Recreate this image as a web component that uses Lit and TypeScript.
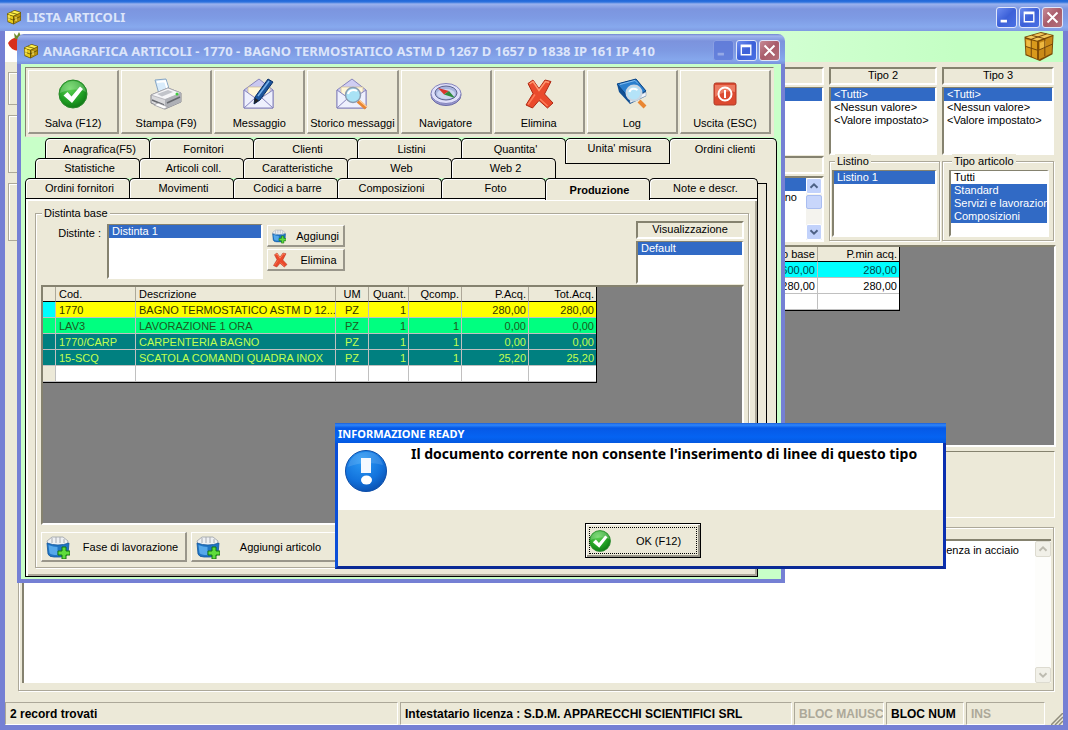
import { LitElement, html, css, svg } from "lit";
import { customElement, property } from "lit/decorators.js";
import { classMap } from "lit/directives/class-map.js";

const icons: Record<string, any> = {
  cube: svg`<svg viewBox="0 0 16 16"><path d="M1 4.500 8.500 1 15 3v8.500L7.500 15.500 1.500 13z" fill="#6b5a08"/><path d="M1.500 5 8.500 1.800 14.300 3.400 7.300 6.800z" fill="#fff04a"/><path d="M1.500 5.800 7 7.600V14.500L2 12.300z" fill="#e8cc1c"/><path d="M8 7.600 14.300 4.300V11.200L8 14.500z" fill="#b89410"/><path d="M4.600 3.600 10.800 5.200M2 9 7 11 14.300 7.500" stroke="#4a3c00" stroke-width=".7" fill="none"/><path d="M3 6v5M10 8v4" stroke="#fff580" stroke-width="1"/></svg>`,
  parcel: svg`<svg viewBox="0 0 32 32"><path d="M1 6 18 1l13 3-1 20-13 7L2 25z" fill="#7a4a04"/><path d="M2.500 6.500 17.500 2l12 2.500L14 10z" fill="#f4c95a"/><path d="M2 8l12 3v18L3 24z" fill="#d9991c"/><path d="M16 11 30 5.500 29 23 16 29.500z" fill="#c98a18"/><path d="M3 9l5 1.500v7L3 16z" fill="#f0bc45"/><path d="M17 12l6-2v7l-6 2z" fill="#eeb840"/><path d="M8.500 4.500 22 8v18M24 3 8 8.500V27M2.500 16 15 20l15-6.500" stroke="#70430a" stroke-width="1" fill="none"/><path d="M15 10.500V30" stroke="#8a5408" stroke-width="1"/></svg>`,
  check: svg`<svg viewBox="0 0 32 32"><defs><radialGradient id="gc" cx=".4" cy=".3" r=".8"><stop offset="0" stop-color="#5fd455"/><stop offset=".6" stop-color="#1f9e22"/><stop offset="1" stop-color="#0c6a12"/></radialGradient></defs><circle cx="16" cy="16" r="14" fill="url(#gc)" stroke="#2a8a2c"/><path d="M3 15C4 7 10 3 16 3s12 4 13 11C22 10 12 11 3 15z" fill="#fff" opacity=".22"/><path d="M6.500 17.500 10.500 14l4 4.500L23 8.500l3 2.500L15 25z" fill="#fff"/></svg>`,
  printer: svg`<svg viewBox="0 0 32 32"><path d="M5 2 16 1l4 13-11 2z" fill="#d9ecfb" stroke="#86a5c4"/><path d="M7 4l8-.8 2.500 8" fill="none" stroke="#fff" stroke-width="2"/><path d="M1 17 18 10l13 5v9l-16 7L1 25z" fill="#d9d9dc" stroke="#85858c"/><path d="M1 17 18 10l13 5-16 6.500z" fill="#f6f6f8" stroke="#a4a4aa" stroke-width=".7"/><path d="m7 16 11-4 5 2-11 4.500z" fill="#c2c4ca"/><path d="M15 21.500V31l16-7v-9z" fill="#aeb0b6"/><path d="m2 22 12 5M17 25l13-6" stroke="#66686e" stroke-width="1.500"/><path d="m4 27 10 4 4-2-10-4z" fill="#fff" stroke="#96969c" stroke-width=".7"/><circle cx="27" cy="16" r="1.500" fill="#3ecb3c"/></svg>`,
  message: svg`<svg viewBox="0 0 32 32"><path d="M1 12 16 1l14 11v18H1z" fill="#c9c8f0" stroke="#8684bd"/><path d="M5 9h22v13H5z" fill="#fff6d8" stroke="#cdbb8c" stroke-width=".7"/><path d="M1 12l14 10 15-10v18H1z" fill="#eef0fd" stroke="#8684bd"/><path d="m1 30 11-10M30 30 19 20" stroke="#8684bd"/><path d="m12 19 13-18 5 3-13 18-6 4z" fill="#1c559c" stroke="#0b2f66"/><path d="m15 18 11-15" stroke="#79b2ea" stroke-width="1.500"/><path d="m11 26 1-6 4 2.500z" fill="#222"/></svg>`,
  history: svg`<svg viewBox="0 0 32 32"><path d="M1 12 16 1l14 11v18H1z" fill="#cfcdf2" stroke="#8684bd"/><path d="M5 9h22v13H5z" fill="#fff6d8" stroke="#cdbb8c" stroke-width=".7"/><path d="M1 12l14 10 15-10v18H1z" fill="#eef0fd" stroke="#8684bd"/><path d="m1 30 11-10M30 30 19 20" stroke="#8684bd"/><path d="m22 23 8 7" stroke="#e98632" stroke-width="4"/><path d="m23 22 8 7" stroke="#ffcf9a" stroke-width="1.200"/><circle cx="17" cy="17" r="7.500" fill="#a9e2f5" stroke="#8a9bb0" stroke-width="1.500"/><path d="M12 16c1-4 6-5 9-3" stroke="#fff" stroke-width="2" fill="none"/></svg>`,
  compass: svg`<svg viewBox="0 0 32 32"><ellipse cx="16" cy="17" rx="15" ry="10.500" fill="#9a9ad0" stroke="#6a6aa4"/><ellipse cx="16" cy="15.500" rx="15" ry="10" fill="#e0e0fa" stroke="#8484bc"/><ellipse cx="16" cy="15" rx="11" ry="7" fill="#a9b4de" stroke="#5a628e"/><ellipse cx="16" cy="16" rx="9" ry="5" fill="#cdd6f2"/><path d="m8 10 11 3-5 3.500z" fill="#d9342c"/><path d="m25 20-11-3.500L19 13z" fill="#2e8a3c"/></svg>`,
  cross: svg`<svg viewBox="0 0 32 32"><path d="M5 5.500 10 2l6 8.500L22 2l6 1.500-6.500 12.500L30 25l-5.500 5-8.500-7.500L9.500 30 3 27l7-11.500z" fill="#ea4a2c" stroke="#b02a14" stroke-width="1"/><path d="M6.500 6 10 3.500l6 9 6.500-9 3.500 1" fill="none" stroke="#ff9a72" stroke-width="1.500"/><path d="M5 26.500 12 16.500M17 21l7.500 7" fill="none" stroke="#ff7c58" stroke-width="1.500"/></svg>`,
  log: svg`<svg viewBox="0 0 32 32"><path d="M1 6 20 1l10 12v5L14 26 3 14z" fill="#0f4f94"/><path d="M1 6 20 1l10 12-16 8z" fill="#2b7fcd" stroke="#0d4584"/><path d="m14 22 16-8v4l-16 7z" fill="#f2f5fa" stroke="#7d93ad" stroke-width=".5"/><path d="M4 6.500 19 2.500l3 3" fill="none" stroke="#83bdf0"/><path d="m23 23 6 6" stroke="#e98632" stroke-width="4"/><circle cx="18" cy="15" r="7.500" fill="#b4e3f8" stroke="#c9d6e2" stroke-width="2"/><path d="M13.500 14c1-4 5-4 8-2" stroke="#fff" stroke-width="2" fill="none"/></svg>`,
  exit: svg`<svg viewBox="0 0 32 32"><rect x="5" y="5" width="22" height="22" rx="2" fill="#dc4a30" stroke="#b03a28"/><path d="M6 7h20v7C19 12 12 15 6 19z" fill="#f29078" opacity=".7"/><circle cx="16" cy="16" r="6.500" fill="none" stroke="#fff" stroke-width="2"/><path d="M16 12v8" stroke="#fff" stroke-width="2"/></svg>`,
  basket: svg`<svg viewBox="0 0 24 24"><path d="M1 6 6 2h11l5 4-2 7H3z" fill="#eef0f2" stroke="#9a9ea4" stroke-width=".8"/><path d="M6 3v5M10 2v6M14 2v6M18 4v4" stroke="#a8acb2"/><path d="M1 8q11 4 22 0l-1 11q-2 3-8 3H8q-5 0-6-3z" fill="#1f74c4" stroke="#13579c" stroke-width=".8"/><path d="M2.500 10q5 2 9 2v8Q5 20 3.500 18z" fill="#55a8ea"/><path d="M16 12h4v4h4v4h-4v4h-4v-4h-4v-4h4z" fill="#5edc3c" stroke="#14750f"/></svg>`,
  info: svg`<svg viewBox="0 0 42 42"><defs><radialGradient id="gi" cx=".4" cy=".25" r=".85"><stop offset="0" stop-color="#2b9af5"/><stop offset=".6" stop-color="#1272dc"/><stop offset="1" stop-color="#0a48a4"/></radialGradient></defs><circle cx="21" cy="21" r="20.500" fill="url(#gi)" stroke="#0c4da8"/><path d="M3 17Q6 3 21 2q13 0 17 13-18-5-35 2z" fill="#fff" opacity=".13"/><path d="M16 8h10v15H16z" fill="#f4f8ff"/><ellipse cx="21.500" cy="30" rx="5.500" ry="4.500" fill="#fff"/></svg>`,
  berry: svg`<svg viewBox="0 0 20 24"><path d="M0 12Q3 7 10 6q6-2 9 4-1 8-8 10Q2 19 0 12z" fill="#d8301c"/><path d="m6 2 3 3 2-4 2 4 4-2-3 5H7z" fill="#6d8a2a"/></svg>`,
  min: svg`<svg viewBox="0 0 21 21"><path d="M4 13h7v3H4z" fill="#fff"/></svg>`,
  max: svg`<svg viewBox="0 0 21 21"><path d="M4 4h12v12H4zM5.500 7v7.500h9V7z" fill="#fff" fill-rule="evenodd"/></svg>`,
  close: svg`<svg viewBox="0 0 21 21"><path d="m5 5 11 11m0-11-11 11" stroke="#fff" stroke-width="2.200"/></svg>`,
  up: svg`<svg viewBox="0 0 16 16"><path d="M4 10l4-4 4 4" fill="none" stroke="currentColor" stroke-width="2.200"/></svg>`,
  down: svg`<svg viewBox="0 0 16 16"><path d="M4 6l4 4 4-4" fill="none" stroke="currentColor" stroke-width="2.200"/></svg>`,
  grip: svg`<svg viewBox="0 0 12 12"><path d="M0 12 12 0M4 12l8-8M8 12l4-4" stroke="#8f8c7c" stroke-width="1.500"/></svg>`,
};

const shared = css`
  * { box-sizing: border-box; }
  svg { display: block; width: 100%; height: 100%; }
  button, select, textarea { font: inherit; color: inherit; margin: 0; border-radius: 0; }
`;

@customElement("window-title")
class WindowTitle extends LitElement {
  @property() caption = "";
  @property({ type: Boolean }) child = false;
  static styles = [shared, css`
    :host { display: block; }
    .bar {
      display: flex; align-items: center; gap: 2px; height: 31px; padding: 3px 5px 0 6px;
      background: linear-gradient(#1f66d8 0, #2d72dd 2px, #9ab2ee 4px, #7c95df 9px, #7e9be4 18px, #87a9ee 27px, #7f9ae2);
      color: #dce5fa;
    }
    .bar.child {
      height: 30px; border-radius: 7px 7px 0 0;
      background: linear-gradient(#6f83cf 0, #a0b4ee 2px, #7c93dd 7px, #7e9ae3 17px, #86a8ed 26px, #7a92dc);
    }
    .ico { width: 16px; height: 16px; }
    .cap { flex: 1; margin: 0 0 0 2px; font: bold 13px/16px "Noto Sans", sans-serif; white-space: nowrap; }
    .ctl { width: 21px; height: 21px; padding: 0; border: 1px solid #dfe6fa; border-radius: 3px;
      background: linear-gradient(135deg, #6c8cf0, #3c60d8 50%, #4a70e4); }
    .ctl.x { background: linear-gradient(135deg, #c78a96, #a85c6a 50%, #b4707a); }
    .ctl.off { border-color: #8ea2e4; background: #5a76d8; opacity: .75; }
    .ctl.off svg { opacity: .4; }
  `];
  render() {
    return html`<header class=${classMap({ bar: true, child: this.child })}>
      <span class="ico">${icons.cube}</span>
      <h1 class="cap">${this.caption}</h1>
      <button class=${classMap({ ctl: true, off: this.child })} aria-label="Riduci a icona">${icons.min}</button>
      <button class="ctl" aria-label="Ingrandisci">${icons.max}</button>
      <button class="ctl x" aria-label="Chiudi">${icons.close}</button>
    </header>`;
  }
}

const tools = [
  ["check", "Salva (F12)"], ["printer", "Stampa (F9)"], ["message", "Messaggio"], ["history", "Storico messaggi"],
  ["compass", "Navigatore"], ["cross", "Elimina"], ["log", "Log"], ["exit", "Uscita (ESC)"],
];
const tabRows = [
  ["Anagrafica(F5)", "Fornitori", "Clienti", "Listini", "Quantita'", "Unita' misura", "Ordini clienti"],
  ["Statistiche", "Articoli coll.", "Caratteristiche", "Web", "Web 2"],
  ["Ordini fornitori", "Movimenti", "Codici a barre", "Composizioni", "Foto", "Produzione", "Note e descr."],
];
const rows = [
  ["main", "1770", "BAGNO TERMOSTATICO ASTM D 12...", "PZ", "1", "", "280,00", "280,00"],
  ["work", "LAV3", "LAVORAZIONE 1 ORA", "PZ", "1", "1", "0,00", "0,00"],
  ["part", "1770/CARP", "CARPENTERIA BAGNO", "PZ", "1", "1", "0,00", "0,00"],
  ["part", "15-SCQ", "SCATOLA COMANDI QUADRA INOX", "PZ", "1", "1", "25,20", "25,20"],
  ["blank", "", "", "", "", "", "", ""],
];

@customElement("app-root")
class AppRoot extends LitElement {
  static styles = [shared, css`
    :host { display: block; position: relative; height: 100vh; min-height: 730px; overflow: hidden;
      font: 11px/13px "Liberation Sans", Arial, sans-serif; color: #000; background: #ece9d8; }

    .main { display: flex; flex-direction: column; height: 100%; background: #7580d4; }
    .client { flex: 1; display: flex; flex-direction: column; margin: 0 5px 5px; background: #ece9d8; }
    .strip { display: flex; justify-content: space-between; height: 31px; padding: 0 8px 0 3px;
      background: linear-gradient(90deg, #fff 15%, #c4ffc4 90%); }
    .strip .berry { width: 20px; height: 24px; }
    .strip .parcel { width: 32px; height: 31px; }

    .filters { display: flex; justify-content: space-between; padding: 5px 9px 0 3px; }
    .stubs { display: flex; flex-direction: column; gap: 10px; padding-top: 5px; width: 300px; }
    .stub { height: 33px; border: 1px solid #aca899; box-shadow: inset 1px 1px 0 #fff; }
    .stub.tall { height: 58px; }
    .cols { display: grid; grid-template-columns: 108px 108px 112px; gap: 5px; }
    .col { display: flex; flex-direction: column; min-width: 0; }

    .head, .list, .grid { border: 2px solid; border-color: #85826f #fff #fff #85826f; }
    .head { height: 18px; line-height: 12px; text-align: center; margin-bottom: 2px; }
    .list { display: block; width: 100%; padding: 0; border-top-width: 1px; background: #fff; overflow: hidden; outline: 0; }
    .list option { height: 13px; min-height: 13px; line-height: 13px; padding: 0 3px; color: #000; }
    .list option:checked { background: #316ac5 linear-gradient(#316ac5, #316ac5); color: #fff; }
    .h68 { height: 68px; }
    .h55 { height: 55px; }
    .h43 { height: 43px; }
    .second { margin-top: 1px; }
    .scrolled { display: flex; height: 66px; border: 2px solid; border-color: #85826f #fff #fff #85826f; background: #fff; }
    .scrolled .list { flex: 1; min-width: 0; border: 0; height: auto; text-align: right; }
    .scrolled .list option { padding-right: 9px; }
    .sbar { display: flex; flex-direction: column; width: 16px; background: #f4f3ee; color: #4d6185; }
    .sbar button { width: 16px; height: 16px; padding: 0; border: 1px solid #fff; border-radius: 2px; background: #c2d2fb; }
    .sbar .thumb { height: 14px; border: 1px solid #a9bdf0; border-radius: 2px; background: #c8d6fb; margin: 1px 0 auto; }
    .sbar.off { color: #bdbbb0; }
    .sbar.off button { border-color: #dddbd0; background: #f1f0e8; }
    .sbar.off button:last-child { margin-top: auto; }

    .group { min-width: 0; margin: 0; padding: 2px; border: 1px solid #aca899; box-shadow: inset 1px 1px 0 #fff, 1px 1px 0 #fff; }
    .group legend { margin-left: 3px; padding: 0 2px; line-height: 14px; background: #ece9d8; }
    .group.small { height: 87px; margin: -1px -3px 0 0; }
    .group.small .list { height: 67px; }
    .group.narrow { margin-right: 0; padding: 2px 4px 2px 6px; }

    .grid { background: #808080; }
    .back { height: 202px; margin: 3px 7px 0 13px; display: flex; padding-left: 680px; }
    table { border-collapse: separate; border-spacing: 0; table-layout: fixed; background: #fff;
      border-right: 1px solid #000; border-bottom: 1px solid #000; }
    .back table { width: 200px; }
    th, td { height: 16px; border-right: 1px solid #c0c0c0; border-bottom: 1px solid #c0c0c0;
      font-weight: normal; text-align: left; white-space: nowrap; overflow: hidden; }
    td { padding: 1px 3px 0; line-height: 14px; }
    th { height: 15px; padding: 0 3px; background: #ece9d8; border-color: #aca899; border-bottom-color: #000; line-height: 14px; }
    th:last-child, td:last-child { border-right: 0; }
    .num { text-align: right; padding-right: 2px; }
    .mid { text-align: center; }
    .cur td { background: #0ff; color: #00474a; }
    .panel { height: 67px; margin: 4px 8px 0 13px; border: 1px solid; border-color: #85826f #fff #fff #85826f; }
    .notes { flex: 1; display: flex; min-height: 164px; margin: 9px 9px 0 13px; padding: 11px 2px 7px 3px; border: 1px solid #aca899;
      box-shadow: inset 1px 1px 0 #fff, 1px 1px 0 #fff; }
    .notes textarea { flex: 1; resize: none; border: 0; border-top: 2px solid #85826f; border-left: 2px solid #85826f;
      background: #fff; text-align: right; padding: 3px 16px 0 0; outline: 0; overflow: hidden; }
    .notes .sbar { border-top: 2px solid #85826f; background: #fdfdfb; }
    .status { display: grid; grid-template-columns: 393px 1fr 90px 78px 79px 16px; gap: 2px; margin-top: 11px; height: 23px;
      font-size: 12px; font-weight: bold; line-height: 22px; white-space: nowrap; }
    .status span { padding-left: 4px; border: 1px solid; border-color: #aca899 #fff #fff #aca899; overflow: hidden; }
    .status .dim { color: #aca899; }
    .status i { align-self: end; justify-self: end; width: 12px; height: 12px; }

    .child { position: absolute; left: 17px; top: 34px; width: 768px; }
    .frame { border: 4px solid #7580d4; border-top: 0; padding: 3px 4px 2px; background: #c8ffc8; }
    .toolbar { display: flex; gap: 2px; margin-right: 3px; padding: 2px; border: 1px solid; border-color: #85826f #ece9d8 #ece9d8 #85826f; background: #ece9d8; }
    .tool { flex: 1; display: flex; flex-direction: column; align-items: center; justify-content: space-between; height: 64px; padding: 7px 0 2px;
      border: 1px solid; border-width: 1px 2px 2px 1px; border-color: #fff #99968a #99968a #fff; background: #ece9d8; white-space: nowrap; }
    .tool i { width: 32px; height: 32px; }

    .tabs { position: relative; margin-top: 1px; }
    .leaf { position: absolute; top: 25px; right: 0; width: 222px; height: 400px; border: 1px solid #000; background: #ece9d8; }
    .leaf.near { top: 45px; right: 10px; height: 360px; }
    .trow { position: relative; display: flex; height: 20px; padding-left: 20px; }
    .trow.r1 { padding-left: 10px; }
    .trow.r2 { padding-left: 0; }
    .tab { flex: 0 0 105px; height: 26px; margin-right: -1px; padding: 0 0 5px 4px; border: 1px solid #000; border-bottom: 0;
      border-radius: 5px 5px 0 0; background: #ece9d8; box-shadow: inset 1px 1px 0 #fff; }
    .r0 .tab:nth-child(6) { border-bottom: 1px solid #000; }
    .r0 .tab:last-child { flex-basis: 108px; }
    .r1 .tab { height: 20px; padding-bottom: 1px; }
    .r2 .tab { height: 21px; padding-bottom: 1px; }
    .r2 .tab:last-child { flex-basis: 109px; }
    .r2 .tab.on { position: relative; z-index: 1; height: 22px; padding-top: 2px; font-weight: bold; }
    .page { position: relative; width: 733px; padding: 7px 8px 8px 9px; border: 1px solid #000; background: #ece9d8;
      box-shadow: inset 2px 2px 0 #fff, inset -2px -2px 0 #aca899; }

    .base { padding: 0 4px 5px 5px; }
    .base > legend { margin-left: 1px; }
    .top { display: flex; align-items: flex-start; height: 65px; gap: 4px; }
    .lbl { width: 62px; padding: 7px 2px 0 0; text-align: right; }
    .dist { width: 156px; margin-top: 4px; }
    .acts { display: flex; flex-direction: column; gap: 2px; margin-top: 5px; }
    .btn { display: flex; align-items: center; gap: 10px; padding: 0 4px; border: 1px solid; border-width: 1px 2px 2px 1px;
      border-color: #fff #99968a #99968a #fff; background: #ece9d8; white-space: nowrap; }
    .btn span { flex: 1; text-align: center; padding-top: 2px; }
    .acts .btn { width: 78px; height: 22px; }
    .acts i { width: 16px; height: 16px; }
    .view { width: 108px; margin-left: auto; padding-top: 1px; }
    .base .grid { height: 240px; }
    .base table { width: 554px; }
    .main-row td { background: #ff0; color: #333300; }
    .work-row td { background: #00ff80; color: #1d5a1d; }
    .part-row td { background: #008080; color: #c0ff50; }
    .main-row .ind { background: #0ff; }
    .blank-row .ind { background: #ece9d8; }
    .foot { display: flex; gap: 4px; margin-top: 7px; }
    .foot .btn { width: 146px; height: 30px; }
    .foot i { width: 24px; height: 24px; }

    .dialog { position: absolute; left: 335px; top: 423px; width: 611px; border: 3px solid; border-top: 0; border-color: #0b4fd8 #0a2fb0 #0a2a96 #0b4fd8; background: #ece9d8; }
    .dtitle { height: 20px; margin: 0 -3px; padding: 1px 3px 0; font: bold 11px/20px "Noto Sans", sans-serif; color: #fff;
      background: linear-gradient(#1c5fd8, #2f86fb 2px, #0659e6 5px, #0563f2 14px, #0458e0); }
    .dbody { display: flex; gap: 24px; height: 67px; padding: 4px 7px; background: #fff; }
    .dbody i { width: 42px; height: 42px; margin-top: 3px; }
    .dbody p { margin: 0; font: bold 14px/14px "Noto Sans", sans-serif; white-space: nowrap; }
    .dfoot { display: flex; justify-content: center; padding: 13px 0 8px 4px; }
    .ok { display: flex; align-items: center; width: 116px; height: 35px; padding: 0 2px; border: 1px solid #000; background: #ece9d8;
      box-shadow: inset 1px 1px 0 #fff, inset -2px -2px 0 #99968a; outline: 1px dotted #000; outline-offset: -5px; }
    .ok i { width: 24px; height: 24px; }
    .ok span { flex: 1; text-align: center; padding: 1px 0 0 8px; }
  `];

  list(id: string, cls: string, label: string, options: string[], on: number[], multi = false) {
    return html`<select id=${id} class="list ${cls}" size="4" ?multiple=${multi} aria-label=${label}>
      ${options.map((o, i) => html`<option ?selected=${on.includes(i)}>${o}</option>`)}
    </select>`;
  }

  renderMain() {
    const kinds = ["<Tutti>", "<Nessun valore>", "<Valore impostato>"];
    return html`<main class="main">
      <window-title caption="LISTA ARTICOLI"></window-title>
      <div class="client">
        <div class="strip"><span class="berry">${icons.berry}</span><span class="parcel">${icons.parcel}</span></div>
        <div class="filters">
          <div class="stubs"><div class="stub"></div><div class="stub tall"></div><div class="stub tall"></div></div>
          <div class="cols">
            <div class="col">
              <div class="head"></div>
              ${this.list("t1", "h68", "Tipo 1", ["<Tutti>"], [0])}
              <div class="head second"></div>
              <div class="scrolled">
                ${this.list("fl", "", "Filtro", ["", "no"], [0])}
                <div class="sbar"><button aria-label="Su">${icons.up}</button><div class="thumb"></div><button aria-label="Giù">${icons.down}</button></div>
              </div>
            </div>
            <div class="col">
              <div class="head">Tipo 2</div>
              ${this.list("t2", "h68", "Tipo 2", kinds, [0])}
              <fieldset class="group small"><legend>Listino</legend>${this.list("li", "", "Listino", ["Listino 1"], [0])}</fieldset>
            </div>
            <div class="col">
              <div class="head">Tipo 3</div>
              ${this.list("t3", "h68", "Tipo 3", kinds, [0])}
              <fieldset class="group small narrow"><legend>Tipo articolo</legend>
                ${this.list("ta", "", "Tipo articolo", ["Tutti", "Standard", "Servizi e lavorazioni", "Composizioni"], [1, 2, 3], true)}
              </fieldset>
            </div>
          </div>
        </div>
        <div class="grid back"><div><table>
          <tr><th class="num">Prezzo base</th><th class="num" style="width:81px">P.min acq.</th></tr>
          <tr class="cur"><td class="num">600,00</td><td class="num">280,00</td></tr>
          <tr><td class="num">280,00</td><td class="num">280,00</td></tr>
          <tr><td></td><td></td></tr>
        </table></div></div>
        <div class="panel"></div>
        <div class="notes">
          <textarea aria-label="Note" .value=${"enza in acciaio"}></textarea>
          <div class="sbar off"><button aria-label="Su">${icons.up}</button><button aria-label="Giù">${icons.down}</button></div>
        </div>
        <footer class="status">
          <span>2 record trovati</span><span>Intestatario licenza : S.D.M. APPARECCHI SCIENTIFICI SRL</span>
          <span class="dim">BLOC MAIUSC</span><span>BLOC NUM</span><span class="dim">INS</span><i>${icons.grip}</i>
        </footer>
      </div>
    </main>`;
  }

  renderChild() {
    const widths = [13, 80, 200, 33, 40, 53, 67, 67];
    const heads = ["", "Cod.", "Descrizione", "UM", "Quant.", "Qcomp.", "P.Acq.", "Tot.Acq."];
    const align = (i: number) => (i > 3 ? "num" : i === 3 ? "mid" : "");
    return html`<section class="child">
      <window-title child caption="ANAGRAFICA ARTICOLI - 1770 - BAGNO TERMOSTATICO ASTM D 1267 D 1657 D 1838 IP 161 IP 410"></window-title>
      <div class="frame">
        <div class="toolbar">${tools.map(([i, t]) => html`<button class="tool"><i>${icons[i]}</i>${t}</button>`)}</div>
        <div class="tabs">
          <div class="leaf"></div>
          ${tabRows.map((r, n) => html`
            ${n === 2 ? html`<div class="leaf near"></div>` : ""}
            <div class="trow r${n}" role="tablist">${r.map((t) => html`<button role="tab" class=${classMap({ tab: true, on: t === "Produzione" })}>${t}</button>`)}</div>`)}
          <div class="page">
            <fieldset class="group base"><legend>Distinta base</legend>
              <div class="top">
                <label class="lbl" for="db">Distinte :</label>
                ${this.list("db", "dist h55", "Distinte", ["Distinta 1"], [0])}
                <div class="acts">
                  <button class="btn"><i>${icons.basket}</i><span>Aggiungi</span></button>
                  <button class="btn"><i>${icons.cross}</i><span>Elimina</span></button>
                </div>
                <div class="view"><div class="head">Visualizzazione</div>${this.list("vi", "h43", "Visualizzazione", ["Default"], [0])}</div>
              </div>
              <div class="grid"><table>
                <colgroup>${widths.map((w) => html`<col style="width:${w}px">`)}</colgroup>
                <thead><tr>${heads.map((h, i) => html`<th class=${align(i)}>${h}</th>`)}</tr></thead>
                <tbody>${rows.map(([k, ...c]) => html`<tr class="${k}-row"><td class="ind"></td>${c.map((v, i) => html`<td class=${align(i + 1)}>${v}</td>`)}</tr>`)}</tbody>
              </table></div>
              <div class="foot">
                <button class="btn"><i>${icons.basket}</i><span>Fase di lavorazione</span></button>
                <button class="btn"><i>${icons.basket}</i><span>Aggiungi articolo</span></button>
              </div>
            </fieldset>
          </div>
        </div>
      </div>
    </section>`;
  }

  render() {
    return html`${this.renderMain()}${this.renderChild()}
      <section class="dialog" role="alertdialog" aria-labelledby="dt">
        <div class="dtitle" id="dt">INFORMAZIONE READY</div>
        <div class="dbody"><i>${icons.info}</i><p>Il documento corrente non consente l'inserimento di linee di questo tipo</p></div>
        <div class="dfoot"><button class="ok"><i>${icons.check}</i><span>OK (F12)</span></button></div>
      </section>`;
  }
}
